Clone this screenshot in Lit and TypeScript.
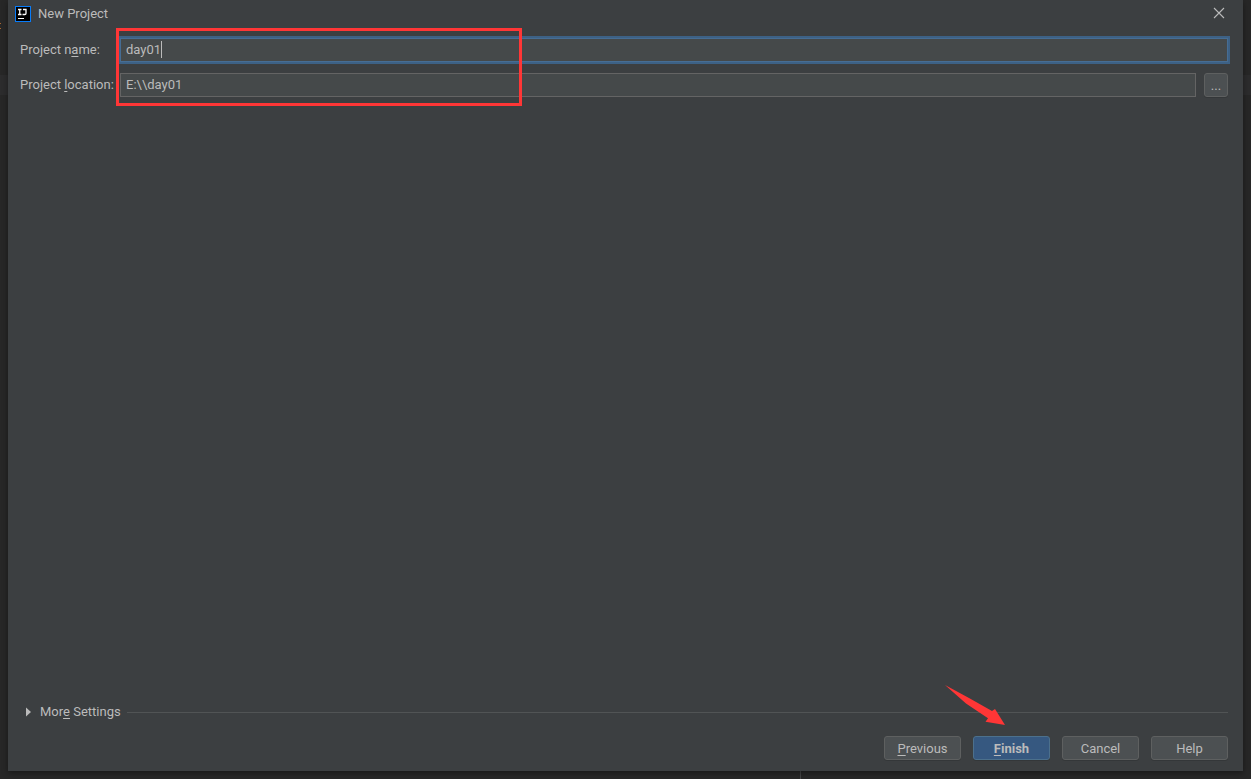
import { LitElement, html, css } from "lit";
import { customElement, state } from "lit/decorators.js";

@customElement("app-root")
export class AppRoot extends LitElement {
  @state() private projectName = "day01";
  @state() private projectLocation = "E:\\\\day01";

  static styles = css`
    :host {
      display: block;
      font-family: Roboto, "Open Sans", sans-serif;
      font-size: 13px;
      line-height: 18px;
      color: #bbbbbb;
    }
    * { box-sizing: border-box; }
    u { text-underline-offset: 2px; text-decoration-thickness: 1px; }
    .desktop {
      position: relative;
      min-height: 100vh;
      padding: 0 8px 8px;
      background: #272727;
      display: flex;
      overflow: hidden;
    }
    .editor-line {
      position: absolute;
      left: 0;
      right: 0;
      top: 75px;
      height: 20px;
      background: #2c2c2d;
    }
    .editor-mark {
      position: absolute;
      left: 0;
      top: 23px;
      width: 1px;
      height: 6px;
      border-top: 1px solid #a9662f;
      border-bottom: 1px solid #a9662f;
    }
    .splitter {
      position: absolute;
      left: 800px;
      bottom: 0;
      width: 1px;
      height: 8px;
      background: #444546;
    }
    .dialog {
      position: relative;
      flex: 1;
      display: flex;
      flex-direction: column;
      background: #3c3f41;
      box-shadow: 0 2px 6px rgba(0, 0, 0, 0.4);
    }
    .titlebar {
      display: flex;
      align-items: center;
      height: 27px;
      padding: 0 16px 0 7px;
      gap: 7px;
    }
    .title { flex: 1; font: inherit; margin: 0; }
    .logo, .close svg { display: block; }
    .close {
      border: 0;
      padding: 2px 2px 4px;
      margin: 0;
      background: none;
      color: #bbbbbb;
    }
    .form {
      display: grid;
      grid-template-columns: 100px minmax(0, 1fr) 24px;
      column-gap: 8px;
      row-gap: 11px;
      padding: 11px 15px 0 12px;
    }
    .row { display: contents; }
    .form label {
      align-self: center;
      white-space: nowrap;
    }
    .field { position: relative; margin-left: -8px; display: flex; }
    .field.wide { grid-column: span 2; }
    input {
      flex: 1;
      min-width: 0;
      height: 24px;
      margin: 0;
      padding: 0 5px 2px;
      border: 1px solid #646464;
      background: #45494a;
      color: #bbbbbb;
      font: inherit;
      outline: none;
    }
    .active input {
      border-color: #466d94;
      box-shadow: 0 0 0 2px #3d6185;
    }
    .caret {
      position: absolute;
      left: 41px;
      top: 3px;
      width: 1px;
      height: 17px;
      background: #bbbbbb;
    }
    .button {
      height: 24px;
      width: 77px;
      padding: 2px 0 0;
      border: 1px solid #5e6060;
      border-radius: 3px;
      background: #4c5052;
      color: #bbbbbb;
      font: inherit;
      box-shadow: 0 1px 0 rgba(0, 0, 0, 0.12);
    }
    .button.small { width: 24px; }
    .button.primary {
      background: #365880;
      border-color: #4c708c;
      font-weight: 700;
    }
    .content { flex: 1; }
    .more {
      display: flex;
      align-items: center;
      gap: 6px;
      padding: 0 15px 0 16px;
    }
    .toggle {
      display: flex;
      align-items: center;
      gap: 8px;
      padding: 0;
      border: 0;
      background: none;
      color: inherit;
      font: inherit;
    }
    .rule { flex: 1; height: 1px; background: #515455; }
    .footer {
      display: flex;
      justify-content: flex-end;
      gap: 12px;
      padding: 15px 15px 11px;
    }
    .highlight {
      position: absolute;
      left: 108px;
      top: 28px;
      width: 406px;
      height: 78px;
      border: 3px solid #ff3636;
      pointer-events: none;
    }
    .arrow {
      position: absolute;
      right: 238px;
      bottom: 46px;
      pointer-events: none;
    }
  `;

  render() {
    return html`
      <div class="desktop">
        <div class="editor-line"></div>
        <div class="editor-mark"></div>
        <div class="splitter"></div>
        <main class="dialog">
          <header class="titlebar">
            <svg class="logo" width="16" height="16" viewBox="0 0 16 16" aria-hidden="true">
              <rect width="16" height="16" fill="#087cfa" />
              <rect x="1" y="1" width="14" height="14" fill="#000" />
              <path d="M3 3.500h3.500M4.750 3.500v5M3 8.500h3.500M8 3.500h3v3.800q0 1.200-1.200 1.200H7.500" fill="none" stroke="#fff" stroke-width="1.300" />
              <rect x="3" y="12" width="6" height="1" fill="#fff" />
            </svg>
            <h1 class="title">New Project</h1>
            <button class="close" aria-label="Close">
              <svg width="12" height="12" viewBox="0 0 12 12">
                <path d="M1 1l10 10M11 1L1 11" stroke="currentColor" stroke-width="1.1" fill="none" />
              </svg>
            </button>
          </header>
          <div class="form">
            <div class="row">
              <label for="name">Project n<u>a</u>me:</label>
              <div class="field wide active">
                <input id="name" type="text" .value=${this.projectName}
                  @input=${(e: Event) => (this.projectName = (e.target as HTMLInputElement).value)} />
                <span class="caret"></span>
              </div>
            </div>
            <div class="row">
              <label for="location">Project <u>l</u>ocation:</label>
              <div class="field">
                <input id="location" type="text" .value=${this.projectLocation}
                  @input=${(e: Event) => (this.projectLocation = (e.target as HTMLInputElement).value)} />
              </div>
              <button class="button small" aria-label="Browse">...</button>
            </div>
          </div>
          <div class="content"></div>
          <div class="more">
            <button class="toggle" aria-expanded="false">
              <svg width="8" height="10" viewBox="0 0 8 10" aria-hidden="true">
                <path d="M2 0.500l5 4.500-5 4.500z" fill="#bbbbbb" />
              </svg>
              <span>Mor<u>e</u> Settings</span>
            </button>
            <div class="rule"></div>
          </div>
          <footer class="footer">
            <button class="button"><u>P</u>revious</button>
            <button class="button primary"><u>F</u>inish</button>
            <button class="button">Cancel</button>
            <button class="button">Help</button>
          </footer>
          <div class="highlight"></div>
          <svg class="arrow" width="60" height="40" viewBox="0 0 60 40" aria-hidden="true">
            <path d="M0 0L24 13 47 26 50 24 60 40 40.500 36.700 43 33.300 21 18.500Z" fill="#ff3636" />
          </svg>
        </main>
      </div>
    `;
  }
}
